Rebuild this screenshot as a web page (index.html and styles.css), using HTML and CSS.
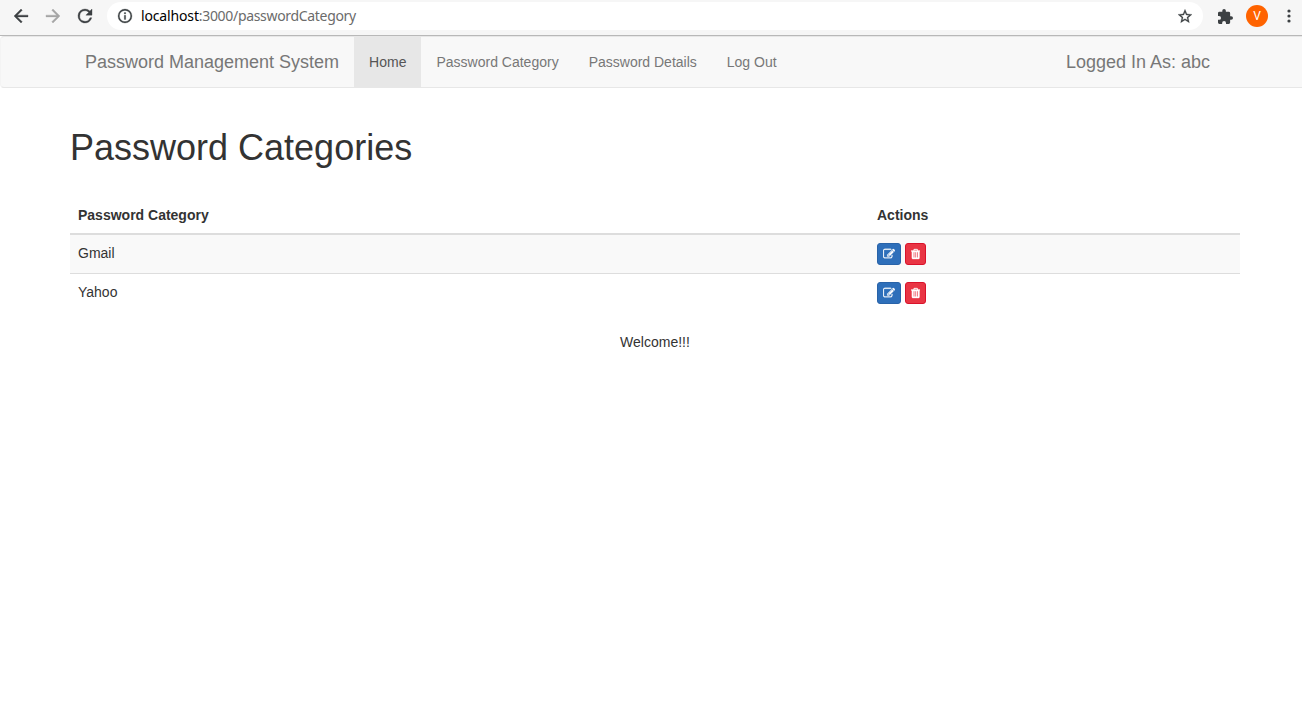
FILE: index.html
```html
<!DOCTYPE html>
<html lang="en">
<head>
<meta charset="utf-8">
<title>Password Management System</title>
<link rel="stylesheet" href="styles.css">
</head>
<body>
<svg class="sprite" width="0" height="0">
  <symbol id="edit" viewBox="0 0 1792 1792"><path d="M888 1184l116-116-152-152-116 116v56h96v96h56zm440-720q-16-16-33 1l-350 350q-17 17-1 33t33-1l350-350q17-17 1-33zm80 594v190q0 119-84.500 203.500t-203.500 84.500h-832q-119 0-203.500-84.500t-84.500-203.500v-832q0-119 84.500-203.500t203.500-84.500h832q63 0 117 25 15 7 18 23 3 17-9 29l-49 49q-14 14-32 8-23-6-45-6h-832q-66 0-113 47t-47 113v832q0 66 47 113t113 47h832q66 0 113-47t47-113v-126q0-13 9-22l64-64q15-15 35-7t20 29zm-96-738l288 288-672 672h-288v-288zm444 132l-92 92-288-288 92-92q28-28 68-28t68 28l152 152q28 28 28 68t-28 68z"/></symbol>
  <symbol id="trash" viewBox="192 0 1408 1792"><path d="M704 1376v-704q0-14-9-23t-23-9h-64q-14 0-23 9t-9 23v704q0 14 9 23t23 9h64q14 0 23-9t9-23zm256 0v-704q0-14-9-23t-23-9h-64q-14 0-23 9t-9 23v704q0 14 9 23t23 9h64q14 0 23-9t9-23zm256 0v-704q0-14-9-23t-23-9h-64q-14 0-23 9t-9 23v704q0 14 9 23t23 9h64q14 0 23-9t9-23zm-544-992h448l-48-117q-7-9-17-11h-317q-10 2-17 11zm928 32v64q0 14-9 23t-23 9h-96v948q0 83-47 143.500t-113 60.500h-832q-66 0-113-58.500t-47-141.500v-952h-96q-14 0-23-9t-9-23v-64q0-14 9-23t23-9h309l70-167q15-37 54-63t79-26h320q40 0 79 26t54 63l70 167h309q14 0 23 9t9 23z"/></symbol>
</svg>
<div class="toolbar">
  <svg class="tool back" viewBox="4 4 16 16"><path d="M20 11H7.830l5.590-5.590L12 4l-8 8 8 8 1.410-1.410L7.830 13H20z"/></svg>
  <svg class="tool forward" viewBox="4 4 16 16"><path d="M12 4l-1.410 1.410L16.170 11H4v2h12.170l-5.580 5.590L12 20l8-8z"/></svg>
  <svg class="tool reload" viewBox="4 4 16 16"><path d="M17.650 6.350A7.960 7.960 0 0 0 12 4a8 8 0 1 0 7.730 10h-2.080A6 6 0 1 1 12 6c1.660 0 3.140.690 4.220 1.780L13 11h7V4z"/></svg>
  <div class="address">
    <svg class="info" viewBox="2 2 20 20"><path d="M11 7h2v2h-2zm0 4h2v6h-2zm1-9a10 10 0 1 0 0 20 10 10 0 0 0 0-20zm0 18a8 8 0 1 1 0-16 8 8 0 0 1 0 16z"/></svg>
    <span class="url"><span class="host">localhost</span>:3000/passwordCategory</span>
    <svg class="star" viewBox="2 2 20 19"><path d="M22 9.240l-7.190-.620L12 2 9.190 8.630 2 9.240l5.460 4.730L5.820 21 12 17.270 18.180 21l-1.630-7.030zM12 15.400l-3.760 2.270 1-4.280-3.320-2.880 4.380-.380L12 6.100l1.710 4.040 4.380.380-3.320 2.880 1 4.280z"/></svg>
  </div>
  <svg class="puzzle" viewBox="2 1 21 21"><path d="M20.500 11H19V7a2 2 0 0 0-2-2h-4V3.500a2.500 2.500 0 0 0-5 0V5H4a2 2 0 0 0-2 2v3.800h1.500a2.700 2.700 0 0 1 0 5.400H2V20a2 2 0 0 0 2 2h3.800v-1.500a2.700 2.700 0 0 1 5.400 0V22H17a2 2 0 0 0 2-2v-4h1.500a2.500 2.500 0 0 0 0-5z"/></svg>
  <span class="avatar">V</span>
  <svg class="dots" viewBox="0 0 4 14"><circle cx="2" cy="2" r="1.600"/><circle cx="2" cy="7" r="1.600"/><circle cx="2" cy="12" r="1.600"/></svg>
</div>
<nav class="navbar">
  <div class="container nav-inner">
    <a class="brand">Password Management System</a>
    <a class="nav-link active">Home</a>
    <a class="nav-link">Password Category</a>
    <a class="nav-link">Password Details</a>
    <a class="nav-link">Log Out</a>
    <span class="user">Logged In As: abc</span>
  </div>
</nav>
<main class="container">
  <h1>Password Categories</h1>
  <table class="table">
    <thead><tr><th class="category">Password Category</th><th>Actions</th></tr></thead>
    <tbody>
      <tr class="odd"><td>Gmail</td><td><div class="actions"><button class="btn primary"><svg><use href="#edit"/></svg></button><button class="btn danger"><svg><use href="#trash"/></svg></button></div></td></tr>
      <tr class="even"><td>Yahoo</td><td><div class="actions"><button class="btn primary"><svg><use href="#edit"/></svg></button><button class="btn danger"><svg><use href="#trash"/></svg></button></div></td></tr>
    </tbody>
  </table>
  <p class="welcome">Welcome!!!</p>
</main>
</body>
</html>
```
FILE: styles.css
```css
* { box-sizing: border-box; }
html { overflow: hidden; }
body { margin: 0; width: 1310px; font: 14px/20px "Liberation Sans", Arial, sans-serif; color: #333; background: #fff; }
.sprite { display: none; }

.toolbar { display: flex; align-items: center; width: 1302px; height: 36px; padding: 0 10px 3px 14px; background: #f6f6f6; border-bottom: 1px solid #b8b8b8; }
.toolbar svg { flex: none; fill: #3c4043; }
.tool { width: 14px; height: 14px; margin-right: 18px; stroke: #3c4043; stroke-width: 0.4; overflow: visible; }
.toolbar .forward { fill: #a5a5a5; stroke: #a5a5a5; }
.toolbar .reload { margin-right: 15px; }
.address { display: flex; align-items: center; width: 1096px; height: 28px; padding: 0 11px; border-radius: 14px; background: #fff; }
.info { width: 14px; height: 14px; margin-right: 9px; stroke: #3c4043; stroke-width: 0.4; overflow: visible; }
.url { flex: 1; font: 14px/20px "Noto Sans", sans-serif; letter-spacing: -0.32px; color: #6b6b6b; white-space: nowrap; }
.host { color: #000; letter-spacing: -0.15px; }
.star { width: 14px; height: 14px; stroke: #3c4043; stroke-width: 0.4; overflow: visible; }
.puzzle { width: 15px; height: 15px; margin-left: 15px; }
.avatar { flex: none; width: 22px; height: 22px; margin: 0 19px 0 13px; border-radius: 50%; background: #ff6300; color: #fff; font: 12px/22px Roboto, sans-serif; text-align: center; }
.dots { width: 4px; height: 14px; }

.container { width: 1170px; margin: 0 auto; }
.navbar { height: 52px; border: 1px solid #e7e7e7; border-left-color: #f4f4f4; border-radius: 4px; background: #f8f8f8; color: #777; }
.nav-inner { display: flex; height: 50px; line-height: 50px; }
.brand { padding: 0 15px; font-size: 18px; }
.nav-link { padding: 0 15px; }
.active { background: #e7e7e7; color: #555; }
.user { margin-left: auto; padding-right: 30px; font-size: 18px; }

h1 { margin: 40px 0 29.4px; font-size: 36px; line-height: 39.6px; font-weight: 500; }
.table { width: 100%; border-spacing: 0; table-layout: fixed; }
.category { width: 799px; }
.table th, .table td { padding: 8px; text-align: left; vertical-align: top; }
.table th { border-bottom: 2px solid #ddd; }
.odd { background: #f9f9f9; }
.even td { border-top: 1px solid #ddd; }
.actions { display: flex; gap: 4px; }
.btn { display: flex; align-items: center; justify-content: center; height: 22px; padding: 0 5px; border: 1px solid; border-radius: 3px; }
.btn svg { height: 12px; fill: #fff; stroke: #fff; stroke-width: 40; }
.primary { background: #2e6fba; border-color: #2963a8; }
.primary svg { width: 12px; }
.danger { background: #e93544; border-color: #d9122b; }
.danger svg { width: 9.4px; }
.welcome { margin: 20px 0 0; text-align: center; }
```
